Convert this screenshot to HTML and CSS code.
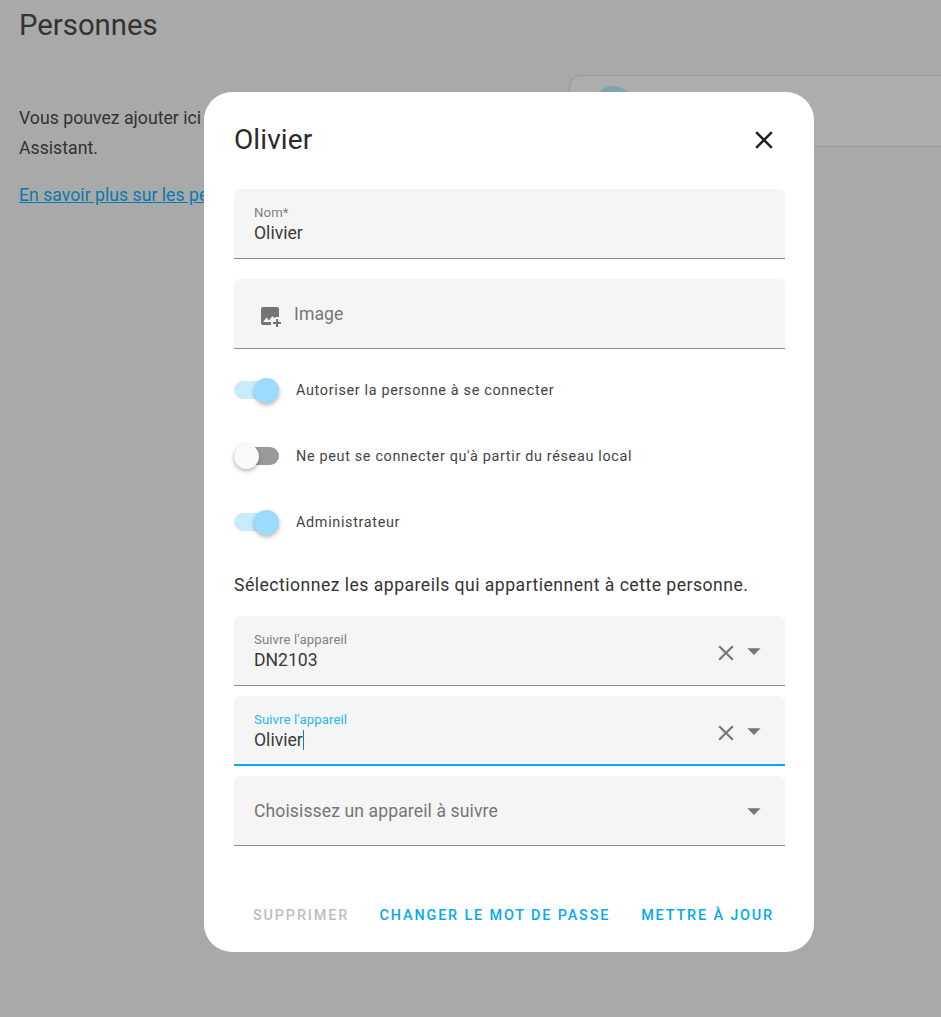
FILE: index.html
```html
<!DOCTYPE html>
<html lang="fr">
<head>
    <meta charset="UTF-8">
    <meta name="viewport" content="width=device-width, initial-scale=1.0">
    <title>Personnes</title>
    <link rel="stylesheet" href="styles.css">
</head>
<body>
    <div class="page">
        <h1 class="page-title">Personnes</h1>
        <div class="page-content">
            <div class="intro">
                <p>Vous pouvez ajouter ici chaque personne d'intérêt dans Home Assistant.</p>
                <p><a href="#">En savoir plus sur les personnes</a></p>
            </div>
            <div class="person-card">
                <div class="avatar"></div>
            </div>
        </div>
    </div>

    <div class="scrim"></div>

    <div class="dialog">
        <div class="dialog-header">
            <h2>Olivier</h2>
            <svg class="icon icon-close" viewBox="0 0 24 24"><path d="M19 6.41 17.59 5 12 10.59 6.41 5 5 6.41 10.59 12 5 17.59 6.41 19 12 13.41 17.59 19 19 17.59 13.41 12z"/></svg>
        </div>

        <div class="field">
            <div class="field-text">
                <label>Nom*</label>
                <div class="value">Olivier</div>
            </div>
        </div>

        <div class="field field-image">
            <svg class="icon icon-image" viewBox="0 0 24 24"><path d="M18 15v3h-3v2h3v3h2v-3h3v-2h-3v-3h-2m-4.700 6H5c-1.100 0-2-.9-2-2V5c0-1.100.9-2 2-2h14c1.100 0 2 .9 2 2v8.300c-.6-.2-1.300-.3-2-.3-1.100 0-2.200.3-3.100.9L14.500 12 11 16.500l-2.500-3L5 18h8.100c-.1.3-.1.7-.1 1 0 .7.1 1.400.3 2z"/></svg>
            <span class="placeholder">Image</span>
        </div>

        <div class="toggles">
            <div class="toggle-row">
                <span class="toggle on"><span class="thumb"></span></span>
                <span>Autoriser la personne à se connecter</span>
            </div>
            <div class="toggle-row">
                <span class="toggle"><span class="thumb"></span></span>
                <span>Ne peut se connecter qu'à partir du réseau local</span>
            </div>
            <div class="toggle-row">
                <span class="toggle on"><span class="thumb"></span></span>
                <span>Administrateur</span>
            </div>
        </div>

        <p class="devices-title">Sélectionnez les appareils qui appartiennent à cette personne.</p>

        <div class="device-fields">
            <div class="field">
                <div class="field-text">
                    <label>Suivre l'appareil</label>
                    <div class="value">DN2103</div>
                </div>
                <svg class="icon icon-clear" viewBox="0 0 24 24"><path d="M19 6.41 17.59 5 12 10.59 6.41 5 5 6.41 10.59 12 5 17.59 6.41 19 12 13.41 17.59 19 19 17.59 13.41 12z"/></svg>
                <svg class="icon icon-arrow" viewBox="0 0 24 24"><path d="M7 10l5 5 5-5H7z"/></svg>
            </div>
            <div class="field focused">
                <div class="field-text">
                    <label>Suivre l'appareil</label>
                    <div class="value"><span class="caret">Olivier</span></div>
                </div>
                <svg class="icon icon-clear" viewBox="0 0 24 24"><path d="M19 6.41 17.59 5 12 10.59 6.41 5 5 6.41 10.59 12 5 17.59 6.41 19 12 13.41 17.59 19 19 17.59 13.41 12z"/></svg>
                <svg class="icon icon-arrow" viewBox="0 0 24 24"><path d="M7 10l5 5 5-5H7z"/></svg>
            </div>
            <div class="field">
                <div class="field-text">
                    <span class="placeholder">Choisissez un appareil à suivre</span>
                </div>
                <svg class="icon icon-arrow" viewBox="0 0 24 24"><path d="M7 10l5 5 5-5H7z"/></svg>
            </div>
        </div>

        <div class="dialog-actions">
            <button class="btn btn-disabled">Supprimer</button>
            <div class="actions-right">
                <button class="btn">Changer le mot de passe</button>
                <button class="btn">Mettre à jour</button>
            </div>
        </div>
    </div>
</body>
</html>
```

FILE: styles.css
```css
* {
    margin: 0;
    padding: 0;
    box-sizing: border-box;
}

html, body {
    height: 100%;
    overflow: hidden;
}

body {
    font-family: Roboto, "Liberation Sans", sans-serif;
    color: #212121;
    background: #fafafa;
}

.page {
    padding: 8px 0 0 19px;
    color: #4c4c4c;
}

.page-title {
    font-size: 29.3px;
    font-weight: 400;
    line-height: 34px;
}

.page-content {
    display: grid;
    grid-template-columns: 530px 1fr;
    gap: 20px;
    margin-top: 33px;
}

.intro {
    font-size: 17.7px;
    line-height: 30.8px;
    padding-top: 27.5px;
}

.intro p {
    margin-bottom: 16px;
}

.intro a {
    color: #0db4ff;
}

.person-card {
    height: 72px;
    padding: 10px 0 0 23px;
    background: #fff;
    border: 1px solid #e0e0e0;
    border-right: none;
    border-radius: 12px 0 0 0;
}

.avatar {
    width: 40px;
    height: 40px;
    border-radius: 50%;
    background: #bbf0ff;
}

.scrim {
    position: fixed;
    inset: 0;
    background: rgba(0,0,0,0.32);
}

.dialog {
    position: fixed;
    left: 204px;
    top: 92px;
    width: 610px;
    height: 860px;
    padding: 0 29px 0 30px;
    background: #fff;
    border-radius: 28px;
}

.dialog-header {
    display: flex;
    align-items: center;
    justify-content: space-between;
    height: 97px;
    padding-bottom: 2px;
}

.dialog-header h2 {
    font-size: 28px;
    font-weight: 400;
    letter-spacing: 0.1px;
    color: #2a2a2a;
}

.icon {
    display: block;
    flex: none;
    fill: #757575;
}

.icon-close {
    width: 30px;
    height: 30px;
    margin-right: 6px;
    fill: #212121;
}

.field {
    display: flex;
    align-items: center;
    height: 70px;
    padding: 0 16px 0 20px;
    background: #f5f5f5;
    border-bottom: 1px solid #8c8c8c;
    border-radius: 6px 6px 0 0;
}

.field-image {
    margin-top: 20px;
    padding-left: 24px;
}

.field-text {
    flex: 1;
    padding-top: 2px;
}

.field label {
    display: block;
    font-size: 13.2px;
    line-height: 15px;
    letter-spacing: 0.1px;
    color: #808080;
}

.value {
    font-size: 17.6px;
    line-height: 21px;
    margin-top: 3px;
    color: #3a3a3a;
}

.placeholder {
    display: block;
    font-size: 17.6px;
    letter-spacing: 0.1px;
    color: #757575;
}

.field-text .placeholder {
    margin-top: -2px;
}

.icon-image {
    width: 24px;
    height: 24px;
    margin-top: 5px;
    margin-right: 12px;
}

.field-image .placeholder {
    padding-top: 1px;
}

.icon-clear {
    width: 26px;
    height: 26px;
    margin: 4px -3px 0 0;
}

.icon-arrow {
    width: 32px;
    height: 32px;
    margin-left: 2px;
    margin-right: -1px;
}

.focused {
    padding-top: 1px;
    border-bottom: 2px solid #03a9f4;
}

.focused label {
    color: #29b6f6;
}

.caret {
    border-right: 1px solid #0288d1;
}

.toggles {
    margin-top: 8px;
}

.toggle-row {
    display: flex;
    align-items: center;
    gap: 17px;
    height: 66px;
    font-size: 14.4px;
    letter-spacing: 0.67px;
    color: #444;
}

.toggle {
    position: relative;
    display: block;
    width: 45px;
    height: 18px;
    background: #9a9a9a;
    border-radius: 9px;
}

.toggle .thumb {
    position: absolute;
    left: 0;
    top: -3.500px;
    width: 25px;
    height: 25px;
    background: #fafafa;
    border-radius: 50%;
    box-shadow: 0 2px 4px rgba(0,0,0,0.3);
}

.toggle.on {
    background: #c8ecfe;
}

.toggle.on .thumb {
    left: 20px;
    background: #9bdcfc;
}

.devices-title {
    height: 61px;
    padding-top: 18px;
    font-size: 17.6px;
    line-height: 24px;
    letter-spacing: 0.48px;
    color: #333;
}

.device-fields {
    display: flex;
    flex-direction: column;
    gap: 10px;
}

.dialog-actions {
    display: flex;
    align-items: center;
    justify-content: space-between;
    margin-top: 51px;
    padding: 0 11px 0 19px;
}

.actions-right {
    display: flex;
    gap: 31px;
}

.btn {
    font-family: inherit;
    font-size: 14.4px;
    font-weight: 500;
    letter-spacing: 1.85px;
    text-transform: uppercase;
    line-height: 38px;
    color: #03a9f4;
    background: none;
    border: none;
}

.btn-disabled {
    color: #bdbdbd;
}
```
